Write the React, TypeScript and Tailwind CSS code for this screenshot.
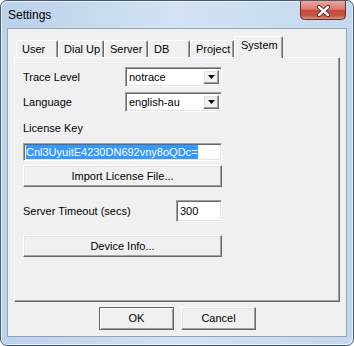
import React from 'react';

const raised =
  'border border-t-white border-l-white border-b-[#696969] border-r-[#696969] shadow-[inset_-1px_-1px_0_#a0a0a0,inset_1px_1px_0_#e3e3e3] bg-[#f0f0f0]';
const defaultBtn =
  'border border-[#646464] shadow-[inset_1px_1px_0_#ffffff,inset_-1px_-1px_0_#a0a0a0] bg-[#f0f0f0]';
const sunken =
  'border border-t-[#a0a0a0] border-l-[#a0a0a0] border-b-white border-r-white shadow-[inset_1px_1px_0_#696969,inset_-1px_-1px_0_#e3e3e3] bg-white';

const tabs = [
  { label: 'User', w: 'w-[42px]' },
  { label: 'Dial Up', w: 'w-[46px]' },
  { label: 'Server', w: 'w-[44px]' },
  { label: 'DB', w: 'w-[42px]' },
  { label: 'Project', w: 'w-[44px]' },
];

const Combo = ({ value }: { value: string }) => (
  <div className={`${sunken} w-[97px] h-[20px] flex items-center p-[2px]`}>
    <span className="flex-1 pl-[1px] leading-[13px]">{value}</span>
    <div className={`${raised} w-[16px] h-full flex items-center justify-center`}>
      <svg width="7" height="4" viewBox="0 0 7 4">
        <path d="M0 0h7L3.5 4z" fill="#000" />
      </svg>
    </div>
  </div>
);

const Button = ({ label, className, look = raised }: { label: string; className: string; look?: string }) => (
  <button className={`${look} ${className} flex items-center justify-center leading-[13px]`}>
    {label}
  </button>
);

export default function App() {
  return (
    <div
      className="w-[354px] h-[346px] bg-white text-[11px] text-black"
      style={{ fontFamily: '"Liberation Sans", Arial, sans-serif' }}
    >
      <div className="relative w-full h-full rounded-[7px] border border-[#4b5a6c] bg-gradient-to-r from-[#bad1ea] via-[#d3e3f4] to-[#c3d8ee] shadow-[inset_1px_1px_0_#e6f0fa,inset_-1px_-1px_0_#e6f0fa] flex flex-col">
        {/* Title bar */}
        <div className="h-[27px] flex items-center pl-[7px] pt-[1px] text-[12px] leading-[14px]">
          Settings
        </div>
        <div className="absolute right-[7px] top-[0px] w-[46px] h-[19px]">
          <svg width="46" height="19" viewBox="0 0 46 19">
            <defs>
              <linearGradient id="cl" x1="0" y1="0" x2="0" y2="1">
                <stop offset="0" stopColor="#e9aaa1" />
                <stop offset="0.45" stopColor="#d7796d" />
                <stop offset="0.5" stopColor="#c54a3d" />
                <stop offset="0.8" stopColor="#c95542" />
                <stop offset="1" stopColor="#e59a86" />
              </linearGradient>
            </defs>
            <path d="M0.5 0v14.5a4 4 0 0 0 4 4h37a4 4 0 0 0 4-4V0" fill="url(#cl)" stroke="#6e2a22" />
            <path d="M19 6l9 8M28 6l-9 8" stroke="#4a1c18" strokeWidth="4.2" strokeLinecap="round" />
            <path d="M19 6l9 8M28 6l-9 8" stroke="#fff" strokeWidth="2.4" strokeLinecap="round" />
          </svg>
        </div>

        {/* Client area */}
        <div className="flex-1 ml-[6px] mr-[6px] mb-[8px] border border-[#8fa3b9] bg-[#f0f0f0] flex flex-col">
          <div className="ml-[6px] mr-[6px] pt-[7px]">
            {/* Tab strip */}
            <div className="flex items-end h-[21px] pl-[2px]">
              {tabs.map((t) => (
                <div
                  key={t.label}
                  className={`${t.w} h-[17px] border-l border-t border-l-white border-t-white border-r border-r-[#696969] shadow-[inset_-1px_0_0_#a0a0a0] rounded-t-[2px] pl-[5px] pt-[2px] leading-[13px]`}
                >
                  {t.label}
                </div>
              ))}
              <div className="relative z-10 w-[49px] h-[22px] -mb-[1px] bg-[#f0f0f0] border-l border-t border-l-white border-t-white border-r border-r-[#696969] shadow-[inset_-1px_0_0_#a0a0a0] rounded-t-[2px] pl-[6px] pt-[2px] leading-[13px]">
                System
              </div>
            </div>

            {/* Panel */}
            <div className="h-[245px] border border-t-white border-l-white border-b-[#696969] border-r-[#696969] shadow-[inset_-1px_-1px_0_#a0a0a0] pl-[8px] pt-[9px] flex flex-col">
              <div className="flex items-center h-[20px]">
                <span className="w-[102px]">Trace Level</span>
                <Combo value="notrace" />
              </div>
              <div className="flex items-center h-[20px] mt-[5px]">
                <span className="w-[102px]">Language</span>
                <Combo value="english-au" />
              </div>
              <div className="mt-[10px] leading-[13px] h-[13px]">License Key</div>
              <div className={`${sunken} mt-[8px] w-[199px] h-[18px] flex items-center pl-[2px]`}>
                <span className="bg-[#3399ff] text-white leading-[14px] h-[14px]">
                  Cnl3UyuitE4230DN692vny8oQDc=
                </span>
              </div>
              <Button label="Import License File..." className="mt-[4px] w-[199px] h-[22px]" />
              <div className="flex items-center h-[22px] mt-[13px]">
                <span className="w-[153px]">Server Timeout (secs)</span>
                <div className={`${sunken} w-[46px] h-[22px] flex items-center pl-[3px] leading-[13px]`}>
                  300
                </div>
              </div>
              <Button label="Device Info..." className="mt-[13px] w-[199px] h-[22px]" />
            </div>
          </div>

          {/* Dialog buttons */}
          <div className="flex justify-center gap-[7px] mt-[5px] pl-[1px]">
            <Button label="OK" look={defaultBtn} className="w-[75px] h-[23px]" />
            <Button label="Cancel" className="w-[75px] h-[23px]" />
          </div>
        </div>
      </div>
    </div>
  );
}
